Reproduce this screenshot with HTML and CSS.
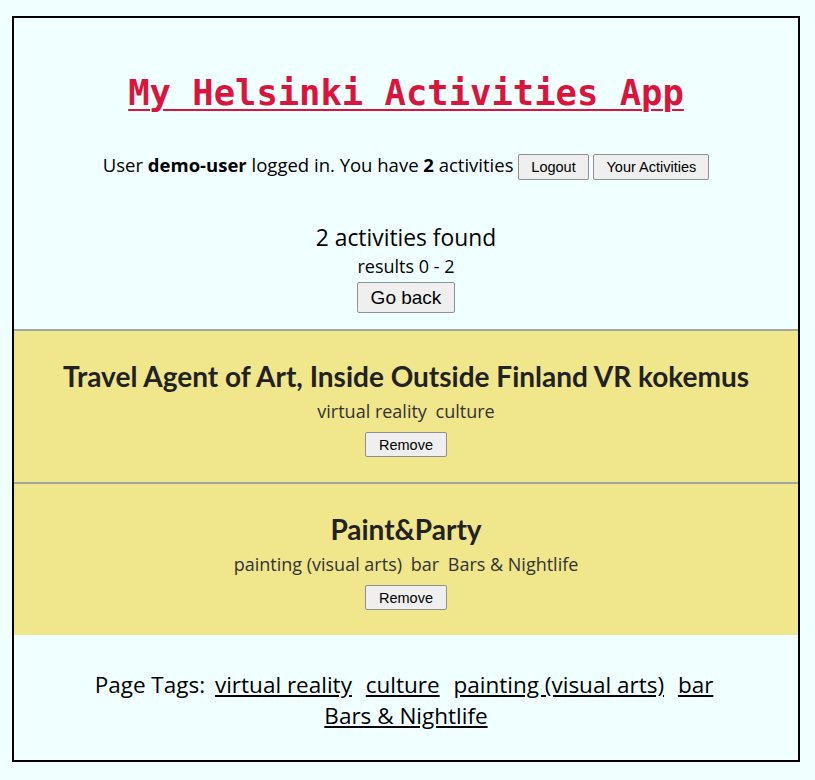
FILE: index.html
```html
<!DOCTYPE html>
<html lang="en">
<head>
<meta charset="utf-8">
<title>My Helsinki Activities App</title>
<link rel="stylesheet" href="styles.css">
</head>
<body>
<div class="frame">
  <header class="top">
    <h1 class="app-title"><a href="#">My Helsinki Activities App</a></h1>
    <div class="status">User <b>demo-user</b> logged in. You have <b>2</b> activities <button class="btn">Logout</button> <button class="btn">Your Activities</button></div>
  </header>
  <section class="summary">
    <div class="found">2 activities found</div>
    <div class="results">results 0 - 2</div>
    <button class="btn btn-big">Go back</button>
  </section>
  <section class="list">
    <article class="card">
      <h2 class="card-title">Travel Agent of Art, Inside Outside Finland VR kokemus</h2>
      <div class="tags"><span class="tag">virtual reality</span> <span class="tag">culture</span></div>
      <button class="btn btn-small">Remove</button>
    </article>
    <article class="card">
      <h2 class="card-title">Paint&amp;Party</h2>
      <div class="tags"><span class="tag">painting (visual arts)</span> <span class="tag">bar</span> <span class="tag">Bars &amp; Nightlife</span></div>
      <button class="btn btn-small">Remove</button>
    </article>
  </section>
  <footer class="page-tags">Page Tags: <a href="#">virtual reality</a> <a href="#">culture</a> <a href="#">painting (visual arts)</a> <a href="#">bar</a> <a href="#">Bars &amp; Nightlife</a></footer>
</div>
</body>
</html>
```

FILE: styles.css
```css
html, body {
  margin: 0;
  background: #f0ffff;
}
body {
  font-family: "Open Sans", "Noto Sans", sans-serif;
  color: #000;
}
.frame {
  margin: 16px 15px 0 12px;
  border: 2px solid #000;
  text-align: center;
}
.top {
  padding-top: 53px;
}
.app-title {
  margin: 0;
  font-family: "DejaVu Sans Mono", monospace;
  font-weight: bold;
  font-size: 35.5px;
  line-height: 44px;
}
.app-title a {
  color: #dc143c;
  text-decoration: underline;
  text-decoration-thickness: 2px;
  text-underline-offset: 4px;
}
.status {
  margin-top: 37px;
  font-size: 18.5px;
  line-height: 26px;
}
.btn {
  font-family: "Liberation Sans", Arial, sans-serif;
  font-size: 14.5px;
  line-height: 16px;
  padding: 4px 12px;
  background: #efefef;
  border: 1px solid #8f8f8f;
  border-radius: 2px;
  color: #000;
  vertical-align: middle;
  margin: 0;
}
.summary {
  margin-top: 44px;
}
.found {
  font-size: 22.8px;
  line-height: 28px;
}
.results {
  font-size: 18px;
  line-height: 28px;
}
.btn-big {
  margin-top: 2px;
  font-size: 19px;
  line-height: 21px;
  padding: 4px 10px;
  width: 98px;
}
.list {
  margin-top: 16px;
}
.card {
  box-sizing: border-box;
  height: 153px;
  background: #f0e68c;
  border-top: 2px solid #a0a7a0;
  padding-top: 27px;
  color: #222;
}
.card-title {
  margin: 0;
  font-family: "Lato", sans-serif;
  font-weight: bold;
  font-size: 28px;
  line-height: 36px;
}
.tags {
  margin-top: 6px;
  font-size: 18px;
  line-height: 22px;
  height: 22px;
  color: #333;
}
.tag {
  margin: 0 2px;
}
.btn-small {
  margin-top: 10px;
  padding: 4px 13px 3px;
}
.page-tags {
  padding: 34px 38px 29px;
  font-size: 22.5px;
  line-height: 31px;
}
.page-tags a {
  color: #000;
  margin: 0 4px;
  white-space: nowrap;
}
```
